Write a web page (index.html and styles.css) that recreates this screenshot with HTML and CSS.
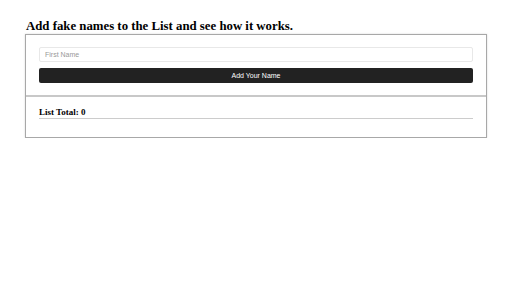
FILE: index.html
```html
<!DOCTYPE html>
<html lang="en">
<head>
  <meta charset="UTF-8" />
  <title>Fake Names List</title>
  <link rel="stylesheet" href="styles.css">
</head>
<body>
  <div class="wrap">
    <h2 class="title">Add fake names to the List and see how it works.</h2>
    <div class="card">
      <div class="card-top">
        <input type="text" class="name-input" placeholder="First Name">
        <button class="add-btn">Add Your Name</button>
      </div>
      <div class="card-bottom">
        <h4 class="total">List Total: 0</h4>
      </div>
    </div>
  </div>
</body>
</html>
```

FILE: styles.css
```css
body {
  margin: 0;
  background: #fff;
  font-family: "Liberation Serif", serif;
}
.wrap {
  width: 462px;
  margin: 0 0 0 25px;
  padding-top: 19px;
}
.title {
  font-size: 12.8px;
  font-weight: 700;
  margin: 0 0 0 1px;
  line-height: 15px;
  color: #000;
}
.card {
  border: 1px solid #a8a8a8;
  box-shadow: 0 0 2px rgba(0,0,0,0.15);
}
.card-top {
  padding: 12px 13px 12px;
  border-bottom: 2px solid #c8c8c8;
  display: flex;
  flex-direction: column;
  gap: 6px;
}
.name-input {
  height: 15px;
  box-sizing: border-box;
  border: 1px solid #e8e8e8;
  border-radius: 2px;
  padding: 0 5px;
  font-family: "Liberation Sans", sans-serif;
  font-size: 7px;
  color: #333;
  outline: none;
}
.name-input::placeholder {
  color: #999;
}
.add-btn {
  height: 15px;
  border: none;
  border-radius: 2px;
  background: #222;
  color: #fff;
  font-family: "Liberation Sans", sans-serif;
  font-size: 7px;
  padding: 0;
}
.card-bottom {
  padding: 9px 13px 18px;
}
.total {
  margin: 0;
  font-size: 9px;
  font-weight: 700;
  line-height: 12px;
  border-bottom: 1px solid #ccc;
}
```
